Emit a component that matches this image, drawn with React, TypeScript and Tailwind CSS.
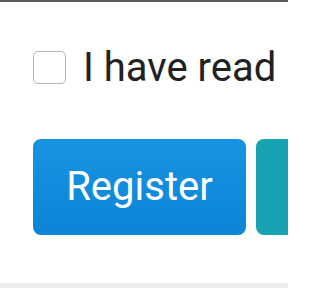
import React from "react";

export default function App() {
  return (
    <div className="w-[288px] h-[288px] bg-white overflow-hidden flex flex-col font-['Roboto',sans-serif]">
      <div className="h-[2px] bg-[#5a5a5a] shrink-0" />
      <div className="flex-1 pl-[33px] pt-[49px] flex flex-col">
        <label className="flex items-center h-[33px] gap-[17px]">
          <span className="w-[33px] h-[33px] shrink-0 rounded-[5px] border-[1.5px] border-[#b5b5b5] bg-white" />
          <span className="text-[40px] leading-none text-[#212121] whitespace-nowrap">I have read</span>
        </label>
        <div className="mt-[55px] flex gap-[10px]">
          <button className="w-[213px] h-[96px] shrink-0 rounded-[8px] bg-gradient-to-b from-[#1694e2] to-[#0d84d6] text-white text-[40px] leading-none">
            Register
          </button>
          <div className="w-[213px] h-[96px] shrink-0 rounded-[8px] bg-[#18a3b2]" />
        </div>
      </div>
      <div className="h-[5px] bg-[#eeeeee] shrink-0" />
    </div>
  );
}
